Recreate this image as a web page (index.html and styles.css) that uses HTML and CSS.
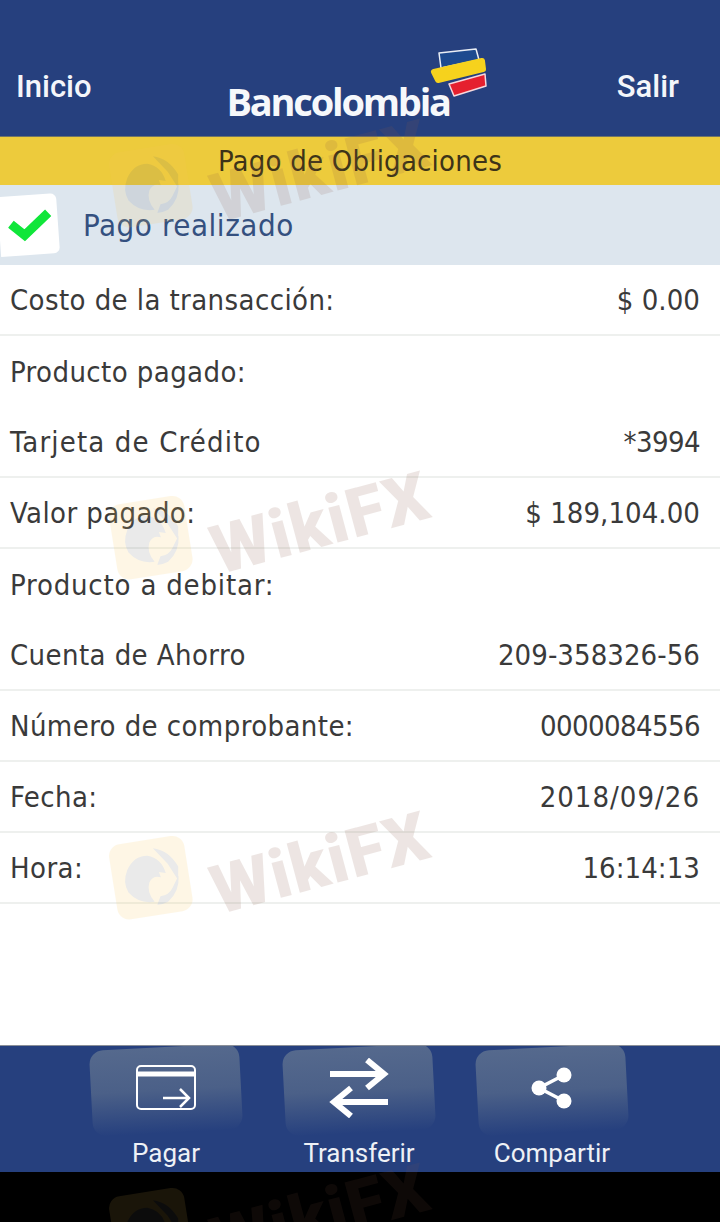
FILE: index.html
```html
<!DOCTYPE html>
<html lang="es">
<head>
  <meta charset="UTF-8" />
  <meta name="viewport" content="width=device-width, initial-scale=1.0"/>
  <title>Bancolombia | Pago de Obligaciones</title>
  <link rel="stylesheet" href="styles.css">
</head>
<body>
  <div class="screen">

    <!-- Header -->
    <header class="top-bar">
      <a class="top-link" href="#">Inicio</a>
      <div class="logo">
        <span class="logo-name">Bancolombia</span>
        <svg class="logo-flag" viewBox="0 0 60 52" width="60" height="52" aria-hidden="true">
          <path d="M11 7 L48 3 L51 14 L13 22 Z" fill="#1d4a8f" stroke="#e9eef5" stroke-width="1.500" stroke-linejoin="round"/>
          <path d="M21 38 L57 28 L58 40 L26 50 Z" fill="#e5202e" stroke="#f6d9dd" stroke-width="1.500" stroke-linejoin="round"/>
          <path d="M6 26 L54 15 L55 23 L10 34 Z" fill="#f6d21d" stroke="#f6d21d" stroke-width="6" stroke-linejoin="round"/>
        </svg>
      </div>
      <a class="top-link" href="#">Salir</a>
    </header>

    <div class="page-title">Pago de Obligaciones</div>

    <div class="status">
      <span class="status-badge">
        <svg viewBox="0 0 44 34" width="44" height="34" aria-hidden="true">
          <path d="M3 15 L16 27 L41 6" fill="none" stroke="#10e63a" stroke-width="9"/>
        </svg>
      </span>
      <span class="status-text">Pago realizado</span>
    </div>

    <!-- Detalle -->
    <main class="details">
      <div class="row"><span class="label">Costo de la transacción:</span><span class="value">$ 0.00</span></div>
      <div class="row row-plain"><span class="label">Producto pagado:</span></div>
      <div class="row"><span class="label wide">Tarjeta de Crédito</span><span class="value tight">*3994</span></div>
      <div class="row"><span class="label">Valor pagado:</span><span class="value">$ 189,104.00</span></div>
      <div class="row row-plain"><span class="label spaced">Producto a debitar:</span></div>
      <div class="row"><span class="label">Cuenta de Ahorro</span><span class="value">209-358326-56</span></div>
      <div class="row"><span class="label">Número de comprobante:</span><span class="value tight">0000084556</span></div>
      <div class="row"><span class="label">Fecha:</span><span class="value spaced">2018/09/26</span></div>
      <div class="row"><span class="label">Hora:</span><span class="value">16:14:13</span></div>
    </main>

    <!-- Bottom actions -->
    <nav class="actions">
      <a class="action" href="#">
        <span class="action-tile"></span>
        <svg class="action-icon" viewBox="0 0 60 46" width="60" height="46" aria-hidden="true">
          <rect x="1" y="1" width="58" height="43" rx="4" fill="none" stroke="#fff" stroke-width="2"/>
          <path d="M1 9 H59" stroke="#fff" stroke-width="5"/>
          <path d="M27 33 H53 M44 24 L53 33 L44 42" fill="none" stroke="#fff" stroke-width="2.500"/>
        </svg>
        <span class="action-label">Pagar</span>
      </a>
      <a class="action" href="#">
        <span class="action-tile"></span>
        <svg class="action-icon" viewBox="0 0 60 60" width="60" height="60" aria-hidden="true">
          <path d="M1 16 H54 M38 2 L55 16 L38 30" fill="none" stroke="#fff" stroke-width="6"/>
          <path d="M59 44 H6 M22 30 L5 44 L22 58" fill="none" stroke="#fff" stroke-width="6"/>
        </svg>
        <span class="action-label">Transferir</span>
      </a>
      <a class="action" href="#">
        <span class="action-tile"></span>
        <svg class="action-icon" viewBox="0 0 42 42" width="42" height="42" aria-hidden="true">
          <path d="M33 8 L8 21 L33 34" fill="none" stroke="#fff" stroke-width="3.500"/>
          <circle cx="33" cy="8" r="7.500" fill="#fff"/>
          <circle cx="8" cy="21" r="7.500" fill="#fff"/>
          <circle cx="33" cy="34" r="7.500" fill="#fff"/>
        </svg>
        <span class="action-label">Compartir</span>
      </a>
    </nav>

    <div class="black-bar"></div>

    <!-- Watermarks -->
    <svg class="mark-defs" aria-hidden="true">
      <symbol id="eagle" viewBox="0 0 56 56">
        <path d="M8 18 Q16 6 28 8 Q40 12 42 26 L36 24 L37 29 Q30 26 26 32 Q22 40 28 50 Q14 50 6 38 Q2 28 8 18 Z" fill="#767676"/>
        <path d="M34 2 Q48 6 54 22 L52 34 L45 18 Z" fill="#767676"/>
        <path d="M53 30 Q52 44 40 52 Q34 54 30 53 L34 46 Q42 46 46 40 Z" fill="#767676"/>
      </symbol>
    </svg>
    <div class="mark mark-one"><span class="mark-tile"><svg width="62" height="62"><use href="#eagle"/></svg></span><span class="mark-text">WikiFX</span></div>
    <div class="mark mark-two"><span class="mark-tile"><svg width="62" height="62"><use href="#eagle"/></svg></span><span class="mark-text">WikiFX</span></div>
    <div class="mark mark-three"><span class="mark-tile"><svg width="62" height="62"><use href="#eagle"/></svg></span><span class="mark-text">WikiFX</span></div>
    <div class="mark mark-four"><span class="mark-tile"><svg width="62" height="62"><use href="#eagle"/></svg></span><span class="mark-text">WikiFX</span></div>

  </div>
</body>
</html>
```

FILE: styles.css
```css
/* Reset & Base */
* { margin: 0; padding: 0; box-sizing: border-box; }
html, body { height: 100%; }
body {
  font-family: 'DejaVu Sans', sans-serif;
  color: #3a3a3a;
  background: #fff;
  overflow: hidden;
}
a { text-decoration: none; color: inherit; }

.screen {
  position: relative;
  display: flex;
  flex-direction: column;
  height: 1222px;
  overflow: hidden;
}

/* Header */
.top-bar {
  height: 137px;
  flex: none;
  display: flex;
  justify-content: space-between;
  align-items: flex-start;
  padding: 68px 41px 0 16px;
  background: #26407e;
  border-bottom: 1px solid #6f7468;
}
.top-link {
  font-family: 'Roboto', sans-serif;
  font-weight: 500;
  font-size: 31px;
  line-height: 38px;
  color: #f4f6fa;
}
.logo {
  position: relative;
  margin: 10px 0 0 -32px;
}
.logo-name {
  font-family: 'Open Sans', sans-serif;
  font-weight: 700;
  font-size: 38px;
  line-height: 46px;
  letter-spacing: -2.2px;
  color: #f6f8fb;
}
.logo-flag {
  position: absolute;
  left: 201px;
  top: -32px;
}

.page-title {
  height: 48px;
  flex: none;
  display: flex;
  align-items: center;
  justify-content: center;
  font-stretch: condensed;
  font-size: 29px;
  letter-spacing: 0.2px;
  color: #3d3418;
  background: #edcb3c;
}

.status {
  height: 80px;
  flex: none;
  display: flex;
  align-items: center;
  gap: 24px;
  background: #dde6ee;
  font-stretch: condensed;
  font-size: 31px;
  letter-spacing: 0.55px;
  color: #34507f;
}
.status-badge {
  width: 59px;
  height: 60px;
  display: flex;
  align-items: center;
  justify-content: flex-end;
  padding-right: 6px;
  background: #fff;
  border-radius: 0 6px 6px 0;
  transform: rotate(-4deg) translateX(-1px);
}

/* Detalle */
.details { flex: 1; }
.row {
  height: 71px;
  display: flex;
  justify-content: space-between;
  align-items: center;
  padding: 0 20px 0 10px;
  font-stretch: condensed;
  font-size: 29px;
  border-bottom: 2px solid #eef0ee;
}
.row-plain { border-bottom: none; }
.label { letter-spacing: 0.4px; }
.label.spaced { letter-spacing: 0.8px; }
.label.wide { letter-spacing: 1.15px; }
.value { letter-spacing: 0.05px; }
.value.tight { letter-spacing: -0.6px; }
.value.spaced { letter-spacing: 1px; }

/* Bottom actions */
.actions {
  height: 127px;
  flex: none;
  display: flex;
  justify-content: flex-start;
  gap: 39px;
  padding-left: 89px;
  background: #26407e;
  border-top: 1px solid #8a8f98;
  overflow: hidden;
}
.action {
  position: relative;
  width: 154px;
  display: flex;
  flex-direction: column;
  align-items: center;
}
.action-tile {
  position: absolute;
  top: 1px;
  left: 2px;
  width: 150px;
  height: 86px;
  border-radius: 14px;
  background: linear-gradient(to bottom, #55698d, #4b6088 50%, #26407e);
  transform: rotate(-3deg);
}
.action-icon {
  position: relative;
  height: 60px;
  margin-top: 12px;
}
.action-label {
  position: absolute;
  bottom: 4px;
  left: 0;
  right: 0;
  text-align: center;
  font-family: 'Roboto', sans-serif;
  font-size: 26px;
  line-height: 30px;
  color: #eef1f6;
}

.black-bar {
  height: 50px;
  flex: none;
  background: #000;
}

/* Watermarks */
.mark-defs { position: absolute; width: 0; height: 0; }
.mark {
  position: absolute;
  left: 118px;
  display: flex;
  align-items: center;
  gap: 18px;
  transform: rotate(-15deg);
  transform-origin: left center;
  pointer-events: none;
}
.mark-tile {
  width: 76px;
  height: 76px;
  flex: none;
  margin-bottom: 30px;
  display: flex;
  align-items: center;
  justify-content: center;
  border-radius: 12px;
  background: #f9c95a;
  transform: rotate(6deg);
}
.mark-text {
  margin-top: 30px;
  font-family: 'Roboto', sans-serif;
  font-weight: 900;
  font-size: 68px;
  line-height: 76px;
  letter-spacing: 1.5px;
  color: #8a5a48;
}
.mark-one { top: 157px; opacity: 0.14; }
.mark-two { top: 509px; opacity: 0.15; }
.mark-three { top: 849px; opacity: 0.15; }
.mark-four { top: 1201px; opacity: 0.1; }
```
